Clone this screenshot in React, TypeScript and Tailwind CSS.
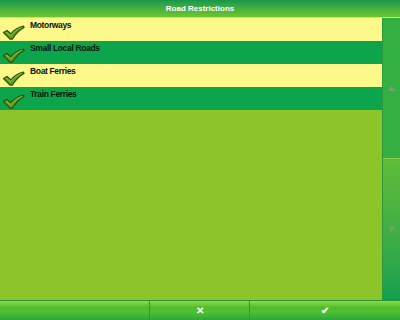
import React from 'react';

const items = [
  { label: 'Motorways', bg: 'bg-[#fcf98a]' },
  { label: 'Small Local Roads', bg: 'bg-[#0ca54c]' },
  { label: 'Boat Ferries', bg: 'bg-[#fcf98a]' },
  { label: 'Train Ferries', bg: 'bg-[#0ca54c]' },
];

const Check = () => (
  <svg width="23" height="15" viewBox="0 0 23 15" className="absolute left-[2px] bottom-[1px]">
    <path
      d="M1.5 7.5 L5 5.5 L9 9 C12 5 16 2.5 21.5 1.2 L22 2.5 C17 5 13.5 9 10.5 14 L8 14 Z"
      fill="#62a020"
      stroke="#2a5410"
      strokeWidth="1.3"
      strokeLinejoin="round"
    />
    <path d="M4 7 L8.5 10.5 C12 6.5 15.5 4 20 2.3" fill="none" stroke="#98cc40" strokeWidth="0.8" />
  </svg>
);

const Arrow = ({ up }: { up?: boolean }) => (
  <svg width="7" height="5" viewBox="0 0 7 5">
    <path d={up ? 'M0 5 L3.5 0 L7 5 Z' : 'M0 0 L7 0 L3.5 5 Z'} fill="#8a9a7a" opacity="0.8" />
  </svg>
);

export default function App() {
  return (
    <div className="w-[400px] h-[320px] flex flex-col bg-[#8cc42a] font-['Liberation_Sans',Arial,sans-serif] overflow-hidden">
      <div className="h-[18px] shrink-0 flex items-center justify-center text-white text-[8px] font-bold bg-gradient-to-b from-[#12984a] to-[#6cc62a] border-b border-[#c8e860]">
        Road Restrictions
      </div>
      <div className="flex-1 flex min-h-0">
        <div className="flex-1 flex flex-col">
          {items.map((it) => (
            <div key={it.label} className={`relative h-[23px] ${it.bg}`}>
              <span className="absolute left-[30px] top-[3px] text-[8.5px] font-bold text-[#0a140a] leading-none tracking-[-0.35px]">
                {it.label}
              </span>
              <Check />
            </div>
          ))}
        </div>
        <div className="w-[18px] flex flex-col border-l border-[#2a9a3a]">
          <div className="h-[141px] bg-[#34b042] flex items-center justify-center border-b border-[#8ccc4a]">
            <Arrow up />
          </div>
          <div className="flex-1 bg-gradient-to-b from-[#60bc38] to-[#12a04e] flex items-center justify-center">
            <Arrow />
          </div>
        </div>
      </div>
      <div className="h-[20px] shrink-0 flex border-t border-[#1c9a3a] bg-[linear-gradient(to_bottom,#9ad83e_0%,#4cbc30_35%,#52c232_55%,#2aa83a_100%)]">
        <div className="w-[150px] border-r border-[#2f9a30]" />
        <div className="w-[100px] border-r border-[#2f9a30] flex items-center justify-center text-white text-[10px] font-bold">
          ✕
        </div>
        <div className="flex-1 flex items-center justify-center text-white text-[10px] font-bold">
          ✔
        </div>
      </div>
    </div>
  );
}
